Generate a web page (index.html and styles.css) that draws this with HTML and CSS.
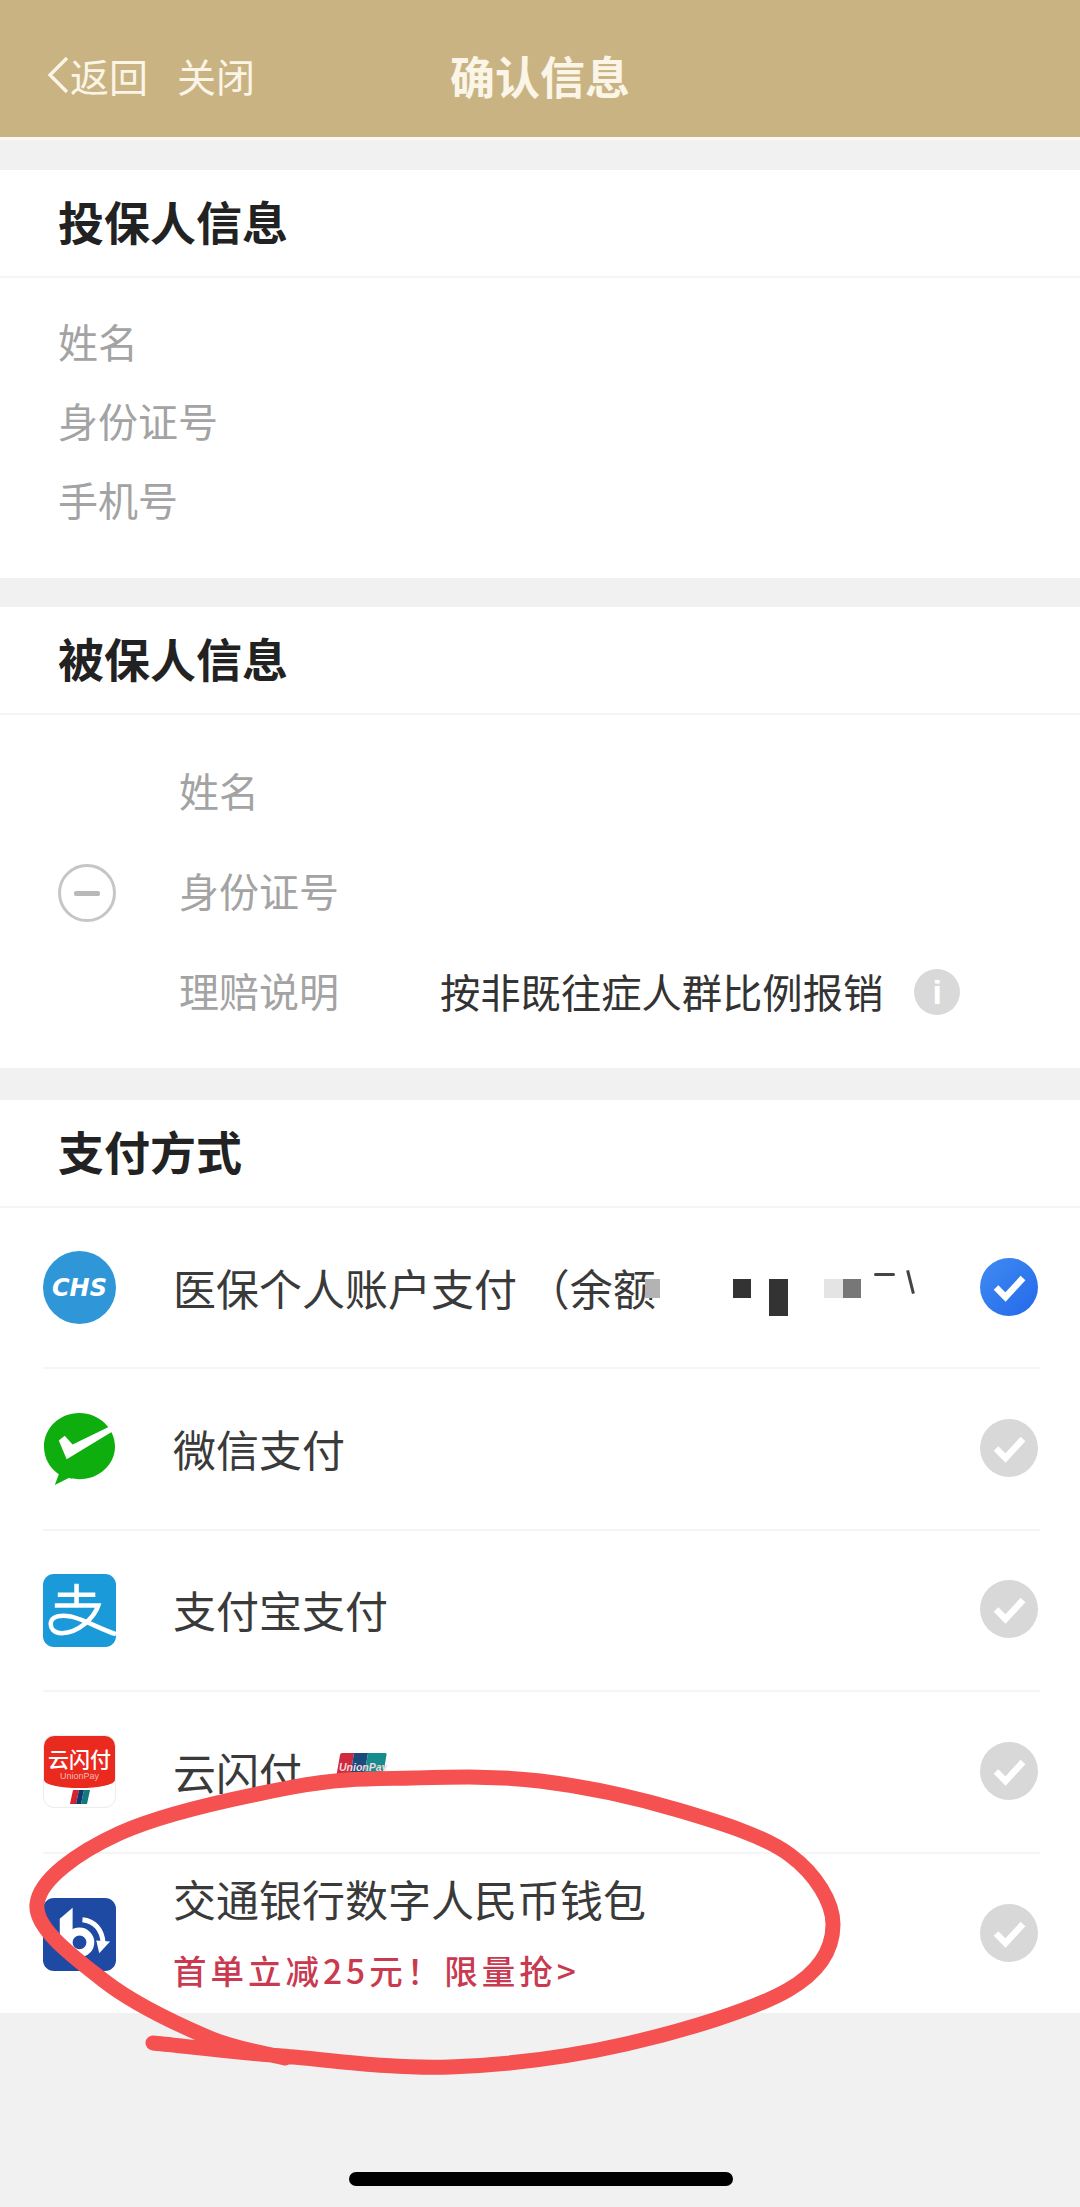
FILE: index.html
```html
<!DOCTYPE html>
<html lang="zh-CN">
<head>
<meta charset="utf-8">
<title>确认信息</title>
<link rel="stylesheet" href="styles.css">
</head>
<body>
<div class="page">
  <header class="nav">
    <div class="nav-left">
      <svg class="chev" viewBox="0 0 24 40"><path d="M21 3 4 20l17 17" fill="none" stroke="#faf5e6" stroke-width="3.4"/></svg>
      <span class="nav-back">返回</span>
      <span class="nav-close">关闭</span>
    </div>
    <div class="nav-title">确认信息</div>
  </header>
  <div class="nav-edge"></div>

  <section class="card card-a">
    <h2 class="card-title">投保人信息</h2>
    <div class="plain-rows">
      <div class="plain-row">姓名</div>
      <div class="plain-row">身份证号</div>
      <div class="plain-row">手机号</div>
    </div>
  </section>

  <section class="card card-b">
    <h2 class="card-title">被保人信息</h2>
    <div class="insured">
      <div class="minus"><span class="minus-bar"></span></div>
      <div class="insured-rows">
        <div class="ins-row"><span class="ins-label">姓名</span></div>
        <div class="ins-row"><span class="ins-label">身份证号</span></div>
        <div class="ins-row">
          <span class="ins-label">理赔说明</span>
          <span class="ins-value">按非既往症人群比例报销</span>
          <span class="info">i</span>
        </div>
      </div>
    </div>
  </section>

  <section class="card card-c">
    <h2 class="card-title">支付方式</h2>
    <div class="pay-row">
      <span class="pay-icon chs"><span class="chs-text">CHS</span></span>
      <span class="pay-name">医保个人账户支付 （余额</span>
      <span class="mosaic">
        <i class="m m1"></i><i class="m m3"></i><i class="m m4"></i><i class="m m5"></i><i class="m m6"></i><i class="m m7"></i><i class="m m8"></i>
      </span>
      <span class="check on"><svg viewBox="0 0 58 58"><path d="M16 29.500 25.500 39 43 20" fill="none" stroke="#fff" stroke-width="6.500"/></svg></span>
    </div>
    <div class="pay-row">
      <span class="pay-icon">
        <svg viewBox="0 0 74 74"><path d="M37 0C17 0 1 15 1 34c0 12 6 22 15 28l-4 11 14-7c3 .8 7 1.200 11 1.200 20 0 36-15 36-33.200S57 0 37 0Z" fill="#0dae0d"/><path d="M16 28 22 23 30 32 67 14 70 19 24 47Z" fill="#fff"/></svg>
      </span>
      <span class="pay-name">微信支付</span>
      <span class="check"><svg viewBox="0 0 58 58"><path d="M16 29.500 25.500 39 43 20" fill="none" stroke="#fff" stroke-width="6.500"/></svg></span>
    </div>
    <div class="pay-row">
      <span class="pay-icon">
        <svg viewBox="0 0 74 74"><rect width="74" height="74" rx="11" fill="#1b9ad9"/><path d="M15 21H53M34 10V32M12 32H56C52 44 36 60 19 60 11 60 7 55 8 49 9 43 18 41 28 43 44 47 56 55 74 61" fill="none" stroke="#fff" stroke-width="4.600"/></svg>
      </span>
      <span class="pay-name">支付宝支付</span>
      <span class="check"><svg viewBox="0 0 58 58"><path d="M16 29.500 25.500 39 43 20" fill="none" stroke="#fff" stroke-width="6.500"/></svg></span>
    </div>
    <div class="pay-row">
      <span class="pay-icon ysf">
        <span class="ysf-top"><span class="ysf-cn">云闪付</span><span class="ysf-en">UnionPay</span></span>
        <svg class="ysf-flag" viewBox="0 0 22 14"><path d="M4 0H10L7 14H1Z" fill="#d3232e"/><path d="M10 0H15L12 14H7Z" fill="#13366e"/><path d="M15 0H21L18 14H12Z" fill="#14797f"/></svg>
      </span>
      <span class="pay-name">云闪付</span>
      <span class="up-badge">
        <svg viewBox="0 0 52 30"><path d="M7 0H19L14 30H2Q0 30 .500 28L5 2Q5.500 0 7 0Z" fill="#cf2a3e"/><path d="M19 0H33L28 30H14Z" fill="#1c4a7d"/><path d="M33 0H50Q52 0 51.500 2L47 28Q46.500 30 45 30H28Z" fill="#168c8c"/></svg>
        <span class="up-text">UnionPay</span>
      </span>
      <span class="check"><svg viewBox="0 0 58 58"><path d="M16 29.500 25.500 39 43 20" fill="none" stroke="#fff" stroke-width="6.500"/></svg></span>
    </div>
    <div class="pay-row">
      <span class="pay-icon">
        <svg viewBox="0 0 74 74"><rect width="74" height="74" rx="11" fill="#1f4aa4"/><path d="M17 21 30 10V44H17Z" fill="#fff"/><circle cx="37" cy="45" r="11" fill="none" stroke="#fff" stroke-width="8"/><path d="M40 22C52 23 60 32 61 46" fill="none" stroke="#fff" stroke-width="5"/><path d="M54 43 68 44 57 56Z" fill="#fff"/></svg>
      </span>
      <span class="pay-stack">
        <span class="pay-name">交通银行数字人民币钱包</span>
        <span class="promo">首单立减25元！限量抢&gt;</span>
      </span>
      <span class="check"><svg viewBox="0 0 58 58"><path d="M16 29.500 25.500 39 43 20" fill="none" stroke="#fff" stroke-width="6.500"/></svg></span>
    </div>
  </section>

  <div class="home-area"><span class="home-bar"></span></div>

  <svg class="scribble" viewBox="0 0 1080 2207"><path d="M153 2043C174.500 2045 232.500 2052 282 2056 331.500 2060 392.700 2069 450 2067 507.300 2065 569.700 2056.800 626 2044 682.300 2031.200 753.500 2009.800 788 1990 822.500 1970.200 832.700 1947.500 833 1925 833.300 1902.500 815.800 1874.200 790 1855 764.200 1835.800 719.700 1822.300 678 1810 636.300 1797.700 584.200 1786.300 540 1781 495.800 1775.700 454.200 1777 413 1778 371.800 1779 341.800 1777.800 293 1787 244.200 1796.200 162.700 1813.500 120 1833 77.300 1852.500 39.800 1879.500 37 1904 34.200 1928.500 74.700 1957.800 103 1980 131.300 2002.200 176.700 2024 207 2037 237.300 2050 272 2054.500 285 2058"/></svg>
</div>
</body>
</html>
```
FILE: styles.css
```css
* { box-sizing: border-box; }
html, body { margin: 0; padding: 0; }
body { background: #f1f1f1; font-family: "Noto Sans CJK SC", "Noto Sans", sans-serif; color: #333; }
.page { position: relative; width: 1080px; height: 2207px; overflow: hidden; background: #f1f1f1; }

.nav { position: relative; height: 137px; background: #c9b383; color: #faf5e6; display: flex; align-items: center; justify-content: center; padding-top: 14px; }
.nav-left { position: absolute; left: 46px; top: 53px; display: flex; align-items: center; font-size: 39px; line-height: 44px; }
.chev { width: 24px; height: 40px; }
.nav-back { margin-right: 29px; }
.nav-title { font-size: 45px; font-weight: 700; line-height: 50px; }
.nav-edge { height: 3px; background: #fbf9f0; }

.card { background: #fff; }
.card-a { margin-top: 30px; height: 408px; }
.card-b { margin-top: 29px; height: 461px; }
.card-c { margin-top: 32px; height: 913px; }
.card-title { margin: 0; height: 108px; display: flex; align-items: center; padding: 0 0 6px 58px; font-size: 46px; font-weight: 700; color: #222; border-bottom: 2px solid #f5f5f5; }

.plain-rows { padding: 23px 0 0 58px; }
.plain-row { height: 79px; display: flex; align-items: center; font-size: 40px; color: #a3a3a3; }

.insured { display: flex; align-items: center; padding: 28px 0 0 58px; }
.minus { width: 58px; height: 58px; border: 3px solid #c6c6c6; border-radius: 50%; display: flex; align-items: center; justify-content: center; margin-right: 63px; flex: none; }
.minus-bar { width: 26px; height: 5px; background: #b9b9b9; border-radius: 2px; }
.insured-rows { flex: 1; }
.ins-row { height: 100px; display: flex; align-items: center; padding-bottom: 6px; }
.ins-label { width: 261px; font-size: 40px; color: #a3a3a3; }
.ins-value { font-size: 40.300px; color: #333; }
.info { width: 46px; height: 46px; margin: 4px 0 0 31px; border-radius: 50%; background: #d9d9d9; color: #fff; font: 700 34px/46px "Liberation Sans", sans-serif; text-align: center; }

.pay-row { position: relative; height: 161.4px; margin: 0 40px 0 43px; display: flex; align-items: center; border-bottom: 2px solid #f5f5f5; }
.pay-row:last-child { border-bottom: 0; }
.pay-icon { width: 73px; height: 73px; flex: none; display: block; margin-right: 57px; position: relative; }
.pay-icon svg { display: block; width: 73px; height: 73px; }
.pay-name { font-size: 43px; line-height: 56px; color: #3a3a3a; white-space: nowrap; margin-top: -2px; }
.pay-stack { display: flex; flex-direction: column; }
.pay-stack .pay-name { margin-top: -6px; }
.promo { margin-top: 22px; font-size: 33.500px; line-height: 44px; font-weight: 500; letter-spacing: 4px; color: #c93a50; white-space: nowrap; }
.check { position: absolute; right: 2px; top: 50%; margin-top: -30px; width: 58px; height: 58px; border-radius: 50%; background: #d8d8d8; }
.check svg { display: block; width: 58px; height: 58px; }
.check.on { background: linear-gradient(135deg, #3f8cf2, #2468ea); }

.chs { border-radius: 50%; background: #2f97d8; display: flex; align-items: center; justify-content: center; }
.chs-text { font: italic 700 24px/1 "DejaVu Sans", sans-serif; color: #fff; }

.ysf { border-radius: 11px; border: 1px solid #ececec; overflow: hidden; background: #fff; }
.ysf-top { display: flex; flex-direction: column; align-items: center; height: 52px; background: #ea2a1f; border-radius: 0 0 36px 36px / 0 0 8px 8px; color: #fff; }
.ysf-cn { font-size: 21px; line-height: 26px; font-weight: 500; margin-top: 9px; }
.ysf-en { font: 9px/10px "Liberation Sans", sans-serif; color: #f6b9b3; }
.pay-icon .ysf-flag { position: absolute; left: 25px; bottom: 3px; width: 22px; height: 14px; }

.up-badge { position: relative; width: 52px; height: 30px; margin-left: 33px; margin-top: -8px; display: block; }
.up-badge svg { display: block; width: 52px; height: 30px; }
.up-text { position: absolute; left: 4px; top: 7px; font: italic 700 10.500px/14px "Liberation Sans", sans-serif; color: #f3d9dd; }

.mosaic { position: absolute; left: 0; top: 0; width: 100%; height: 100%; pointer-events: none; }
.m { position: absolute; display: block; }
.m1 { left: 602px; top: 71px; width: 15px; height: 19px; background: #b3b3b3; }
.m3 { left: 690px; top: 71px; width: 18px; height: 19px; background: #333; }
.m4 { left: 726px; top: 71px; width: 19px; height: 37px; background: #333; }
.m5 { left: 781px; top: 71px; width: 19px; height: 19px; background: #e4e4e4; }
.m6 { left: 800px; top: 71px; width: 18px; height: 19px; background: #777; }
.m7 { left: 831px; top: 65px; width: 21px; height: 3px; background: #444; border-radius: 2px; }
.m8 { left: 866px; top: 62px; width: 3px; height: 24px; background: #444; transform: rotate(-14deg); }

.home-area { position: absolute; left: 0; right: 0; bottom: 21px; display: flex; justify-content: center; }
.home-bar { width: 384px; height: 14px; margin-left: 1px; border-radius: 7px; background: #000; }

.scribble { position: absolute; left: 0; top: 0; width: 1080px; height: 2207px; fill: none; stroke: #f45150; stroke-width: 15; stroke-linecap: round; stroke-linejoin: round; pointer-events: none; }
```
